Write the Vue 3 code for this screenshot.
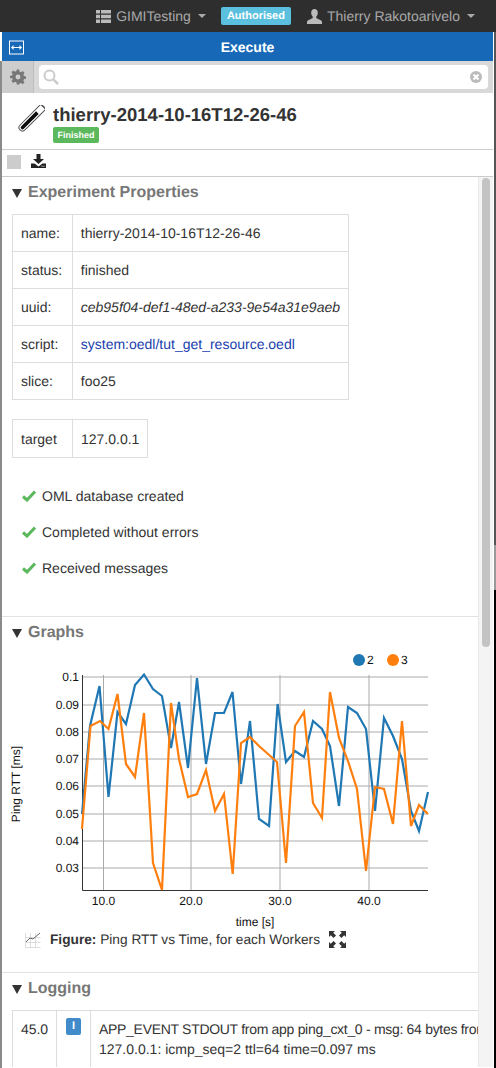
<script setup>
const props = [
	{ key: "name:", value: "thierry-2014-10-16T12-26-46" },
	{ key: "status:", value: "finished" },
	{ key: "uuid:", value: "ceb95f04-def1-48ed-a233-9e54a31e9aeb", kind: "uuid" },
	{ key: "script:", value: "system:oedl/tut_get_resource.oedl", kind: "link" },
	{ key: "slice:", value: "foo25" },
];

const checks = ["OML database created", "Completed without errors", "Received messages"];

const gridX = [
	{ x: 103.5, label: "10.0" },
	{ x: 191, label: "20.0" },
	{ x: 280, label: "30.0" },
	{ x: 369, label: "40.0" },
];

const gridY = [
	{ y: 676, label: "0.1" },
	{ y: 704, label: "0.09" },
	{ y: 731, label: "0.08" },
	{ y: 758, label: "0.07" },
	{ y: 785, label: "0.06" },
	{ y: 813, label: "0.05" },
	{ y: 840, label: "0.04" },
	{ y: 867, label: "0.03" },
];

const blue =
	"82,813 90,725 99.5,685 108.5,796 117.5,711 126,723 135,684 144,673.5 153,688 162,695 171,747 179,701 188,767 197,677 206,763 215,712 224,712 232.5,691 241,783 250,720 259,818 269,825 277.6,703 286,761 295,750 304,756 313,720 322,728 330,745 339,805 348,706 357,712 366,728 375,810 384,717 393,735 402,758 411,810 419,830 428,791";
const orange =
	"82,828 90.5,725 100,720 108.5,728 117.5,693 126,763 135,776 144,712 153,862 162,889 171,702 179,758 188,796 197,793 206,769 215,810 224,793 232.7,873 241,742 250,736 259,745 268,753 277,761 286,862 295,725 304,711 313,802 322,817 330,691 339,737 348,760 357,788 366,870 375,786 384,788 393,823 402,720 411,825 419,804 428,813";
</script>

<template>
	<div class="page">
		<nav class="navbar">
			<svg class="nav-icon" width="15" height="13" viewBox="0 0 15 13">
				<path fill="#bbb" d="M0 0h4v3.4H0zM5 0h10v3.4H5zM0 4.8h4v3.4H0zM5 4.8h10v3.4H5zM0 9.6h4V13H0zM5 9.6h10V13H5z" />
			</svg>
			<span class="nav-text">GIMITesting</span>
			<span class="caret"></span>
			<span class="auth">Authorised</span>
			<svg class="nav-icon user" width="15" height="15" viewBox="0 0 15 15">
				<path fill="#bbb" d="M7.5 0C9.6 0 10.8 1.6 10.8 3.8c0 1.600-.7 3-1.500 3.800v1.400c0 .7 5.700 1.800 5.700 4.100V15H0v-1.900C0 10.800 5.700 9.700 5.700 9V7.600C4.900 6.800 4.200 5.400 4.200 3.800 4.200 1.600 5.400 0 7.500 0z" />
			</svg>
			<span class="nav-text">Thierry Rakotoarivelo</span>
			<span class="caret"></span>
		</nav>

		<div class="panel">
			<header class="execute">
				<svg class="expand" width="15" height="15" viewBox="0 0 15 15">
					<rect x="0.5" y="1" width="14" height="13" fill="none" stroke="#fff" />
					<path fill="none" stroke="#fff" d="M3 7.500h9" />
					<path fill="#fff" d="M2 7.500l2.500-2.500v5zM13 7.500l-2.500-2.500v5z" />
				</svg>
				<span>Execute</span>
			</header>

			<div class="searchbar">
				<div class="gear">
					<svg width="16" height="16" viewBox="-1 -1 26 26">
						<path fill="#777" fill-rule="evenodd" d="M10 0h4l.6 3.300 2.300 1 2.800-1.900 2.900 2.900-1.900 2.800 1 2.300 3.300.6v4l-3.300.6-1 2.300 1.900 2.800-2.900 2.900-2.800-1.900-2.300 1L14 24h-4l-.6-3.300-2.300-1-2.800 1.900-2.900-2.900 1.900-2.800-1-2.300L-1 14v-4l3.300-.6 1-2.300-1.900-2.800 2.900-2.900 2.800 1.900 2.300-1zM12 8a4 4 0 1 0 0 8 4 4 0 0 0 0-8z" />
					</svg>
				</div>
				<div class="search">
					<svg width="16" height="16" viewBox="0 0 16 16">
						<circle cx="6.500" cy="6.500" r="5" fill="none" stroke="#ccc" stroke-width="2" />
						<path stroke="#ccc" stroke-width="2.500" d="M10.300 10.300l4.700 4.700" />
					</svg>
					<svg width="12" height="12" viewBox="0 0 12 12">
						<circle cx="6" cy="6" r="6" fill="#bbb" />
						<path stroke="#fff" stroke-width="2" d="M3.500 3.500l5 5M8.500 3.500l-5 5" />
					</svg>
				</div>
			</div>

			<div class="title-block">
				<svg class="tube" width="28" height="28" viewBox="0 0 28 28">
					<g transform="rotate(45 14 14)">
						<path d="M10.500 -3.500h7V26a3.500 3.500 0 0 1-7 0z" fill="#fff" stroke="#555" stroke-width="1" />
						<path d="M9.800 -3.500h8.400" stroke="#555" stroke-width="1.500" />
						<path d="M12.200 5h3.600v21a1.800 1.800 0 0 1-3.600 0z" fill="#0c0c0c" />
					</g>
				</svg>
				<div>
					<h1>thierry-2014-10-16T12-26-46</h1>
					<span class="finished">Finished</span>
				</div>
			</div>

			<div class="toolbar">
				<span class="stop"></span>
				<svg width="15" height="14" viewBox="0 0 15 14">
					<path fill="#222" d="M5.500 0h4v5H13L7.500 10 2 5h3.500z" />
					<path fill="#222" d="M0 9.500h3.500L7.500 12.500l4-3H15V14H0z" />
					<path fill="#fff" d="M10.500 11.800h1v1h-1zM12.500 11.800h1v1h-1z" />
				</svg>
			</div>

			<div class="body">
				<main class="content">
					<h2 class="section-title"><span class="tri"></span>Experiment Properties</h2>
					<table class="grid props">
						<tr v-for="row in props" :key="row.key">
							<td class="key">{{ row.key }}</td>
							<td :class="row.kind">{{ row.value }}</td>
						</tr>
					</table>

					<table class="grid target">
						<tr>
							<td class="key">target</td>
							<td>127.0.0.1</td>
						</tr>
					</table>

					<ul class="checks">
						<li v-for="c in checks" :key="c">
							<svg width="14" height="12" viewBox="0 0 14 12">
								<path fill="none" stroke="#5cb85c" stroke-width="3" d="M1 6.500l4 3.500 8-8.500" />
							</svg>
							{{ c }}
						</li>
					</ul>

					<section class="section graphs">
						<h2 class="section-title"><span class="tri"></span>Graphs</h2>
						<svg class="chart" width="476" height="290" viewBox="2 640 476 290">
							<circle cx="359" cy="659" r="6" fill="#1f77b4" />
							<text x="367" y="663" class="tick">2</text>
							<circle cx="393" cy="659" r="6" fill="#ff7f0e" />
							<text x="401" y="663" class="tick">3</text>

							<line v-for="g in gridY" :key="g.y" x1="82" x2="428" :y1="g.y" :y2="g.y" class="gridline" />
							<line v-for="g in gridX" :key="g.x" :x1="g.x" :x2="g.x" y1="674" y2="889" class="gridline" />
							<path d="M82.500 674V889.500H428" fill="none" stroke="#333" stroke-width="1" />

							<text v-for="g in gridY" :key="g.label" x="79" :y="g.y + 4" text-anchor="end" class="tick">{{ g.label }}</text>
							<text v-for="g in gridX" :key="g.label" :x="g.x" y="904" text-anchor="middle" class="tick">{{ g.label }}</text>

							<text x="255" y="925" text-anchor="middle" class="tick">time [s]</text>
							<text transform="translate(20 783) rotate(-90)" text-anchor="middle" class="tick">Ping RTT [ms]</text>

							<polyline :points="blue" fill="none" stroke="#1f77b4" stroke-width="2.200" stroke-linejoin="miter" />
							<polyline :points="orange" fill="none" stroke="#ff7f0e" stroke-width="2.200" stroke-linejoin="miter" />
						</svg>
						<div class="figure">
							<svg width="16" height="16" viewBox="0 0 16 16">
								<path fill="none" stroke="#ddd" d="M.5 5.500h15M.5 10.500h15M5.500 1v15M10.500 1v15M.5 1v14.500h15" />
								<path fill="none" stroke="#666" d="M1 10l4-4 3 1 7-6" />
							</svg>
							<span><b>Figure:</b> Ping RTT vs Time, for each Workers</span>
							<svg class="full" width="17" height="17" viewBox="0 0 17 17">
								<path fill="#333" d="M0 0h6L4.200 1.800 7 4.600 4.600 7 1.800 4.200 0 6zM17 0v6l-1.800-1.800L12.400 7 10 4.600l2.800-2.800L11 0zM0 17v-6l1.800 1.800L4.600 10 7 12.400l-2.800 2.800L6 17zM17 17h-6l1.800-1.800L10 12.400l2.400-2.400 2.800 2.800L17 11z" />
							</svg>
						</div>
					</section>

					<section class="section logging">
						<h2 class="section-title"><span class="tri"></span>Logging</h2>
						<table class="grid log">
							<tr>
								<td class="ts">45.0</td>
								<td class="lvl"><span class="info">I</span></td>
								<td class="msg"><span class="msg-head">APP_EVENT STDOUT from app ping_cxt_0 - msg: 64 bytes from</span><br />127.0.0.1: icmp_seq=2 ttl=64 time=0.097 ms</td>
							</tr>
						</table>
					</section>
				</main>
				<div class="track"><div class="thumb"></div></div>
			</div>
		</div>
	</div>
</template>

<style>
html,
body {
	margin: 0;
	background: #fff;
}
</style>

<style scoped>
.page {
	position: relative;
	width: 496px;
	height: 1068px;
	overflow: hidden;
	font-family: "Liberation Sans", Arial, sans-serif;
	font-size: 14px;
	color: #333;
	background: #fff;
	text-rendering: geometricPrecision;
}

.page::after {
	content: "";
	position: absolute;
	right: 0;
	top: 32px;
	bottom: 0;
	width: 2px;
	background: linear-gradient(#555 0 513px, #999 513px 558px, #000 558px);
}

.navbar {
	height: 32px;
	padding-right: 21px;
	background: #2e2e2e;
	display: flex;
	align-items: center;
	justify-content: flex-end;
	box-sizing: border-box;
}

.nav-text {
	margin-left: 5px;
	font-size: 14px;
	color: #a9a9a9;
}

.caret {
	margin-left: 7px;
	border-top: 4px solid #a9a9a9;
	border-left: 4px solid transparent;
	border-right: 4px solid transparent;
}

.auth {
	margin: 0 16px 0 15px;
	padding: 0 6px;
	height: 18px;
	line-height: 18px;
	border-radius: 2px;
	background: #5bc0de;
	color: #fff;
	font-size: 11px;
	font-weight: bold;
}

.panel {
	margin-right: 3px;
	margin-left: 2px;
	position: relative;
	height: 1036px;
}

.panel::before {
	content: "";
	position: absolute;
	left: -2px;
	top: 29px;
	bottom: 0;
	width: 2px;
	background: #8a8a8a;
}

.execute {
	height: 29px;
	background: #1769b8;
	color: #fff;
	font-size: 14px;
	font-weight: bold;
	display: flex;
	align-items: center;
	justify-content: center;
	position: relative;
}

.expand {
	position: absolute;
	left: 7px;
	top: 8px;
}

.searchbar {
	height: 32px;
	background: #d9d9d9;
	display: flex;
	box-sizing: border-box;
}

.gear {
	width: 32px;
	background: #cdcdcd;
	border-right: 1px solid #bdbdbd;
	box-sizing: border-box;
	display: flex;
	align-items: center;
	justify-content: center;
}

.search {
	flex: 1;
	margin: 4px 5px;
	background: #fff;
	border-radius: 4px;
	display: flex;
	align-items: center;
	justify-content: space-between;
	padding: 0 6px 0 4px;
}

.title-block {
	height: 57px;
	padding: 12px 0 0 15px;
	box-sizing: border-box;
	display: flex;
	border-bottom: 1px solid #ccc;
}

.tube {
	margin-right: 8px;
}

h1 {
	margin: 1px 0 0;
	font-size: 18.500px;
	line-height: 18px;
	font-weight: bold;
	color: #333;
}

.finished {
	display: block;
	width: 46px;
	height: 16px;
	margin-top: 3px;
	background: #5cb85c;
	border-radius: 2px;
	color: #fff;
	font-size: 9px;
	font-weight: bold;
	line-height: 16px;
	text-align: center;
}

.toolbar {
	height: 27px;
	padding-left: 5px;
	box-sizing: border-box;
	border-bottom: 1px solid #ccc;
	display: flex;
	align-items: flex-start;
	gap: 10px;
}

.stop {
	width: 14px;
	height: 14px;
	margin-top: 5px;
	background: #ccc;
}

.toolbar svg {
	margin-top: 4px;
}

.body {
	height: 890px;
	display: flex;
	overflow: hidden;
}

.content {
	width: 476px;
	flex: none;
	overflow: hidden;
}

.section-title {
	margin: 0;
	height: 30px;
	padding: 2px 0 0 10px;
	box-sizing: border-box;
	display: flex;
	align-items: center;
	color: #777;
	font-size: 16px;
	font-weight: bold;
}

.tri {
	margin-right: 6px;
	border-top: 9px solid #333;
	border-left: 5.500px solid transparent;
	border-right: 5.500px solid transparent;
}

.grid {
	border-collapse: collapse;
	margin-left: 10px;
}

.grid td {
	border: 1px solid #ddd;
	padding: 0 8px;
	height: 36px;
	white-space: nowrap;
}

.props {
	margin-top: 7px;
	width: 337px;
}

.grid .key {
	width: 43px;
}

.uuid {
	font-style: italic;
}

.link {
	color: #1a3fae;
}

.target {
	margin-top: 19px;
}

.target td {
	height: 37px;
}

.checks {
	list-style: none;
	margin: 20px 0 0 20px;
	padding: 0;
}

.checks li {
	height: 36px;
	display: flex;
	align-items: center;
	gap: 6px;
}

.section {
	border-top: 1px solid #e3e3e3;
}

.graphs {
	margin-top: 30px;
	height: 355px;
}

.chart {
	display: block;
	margin-top: -6px;
}

.tick {
	font-size: 12px;
	fill: #111;
}

.gridline {
	stroke: #aaa;
	stroke-width: 1;
}

.figure {
	margin: 0 0 0 23px;
	display: flex;
	align-items: center;
	gap: 9px;
	font-size: 13.700px;
}

.logging .section-title {
	margin-bottom: 7px;
}

.log {
	width: 520px;
	table-layout: fixed;
}

.log td {
	height: 56px;
	padding: 0;
	vertical-align: top;
}

.log .ts {
	width: 43px;
	text-align: center;
	padding-top: 8px;
	line-height: 20px;
}

.log .lvl {
	width: 33px;
	text-align: center;
	padding-top: 5px;
}

.info {
	display: inline-block;
	width: 15px;
	height: 17px;
	line-height: 17px;
	border-radius: 2px;
	background: #428bca;
	color: #fff;
	font-size: 11px;
	font-weight: bold;
}

.log .msg {
	padding: 8px 0 0 8px;
	white-space: nowrap;
	line-height: 20px;
}

.msg-head {
	letter-spacing: -0.3px;
}

.track {
	width: 15px;
	flex: none;
	background: #f4f4f4;
	border-left: 1px solid #e8e8e8;
	box-sizing: border-box;
	padding: 1px 3px 0 3px;
}

.thumb {
	height: 469px;
	border-radius: 4px;
	background: #c3c3c3;
}
</style>
